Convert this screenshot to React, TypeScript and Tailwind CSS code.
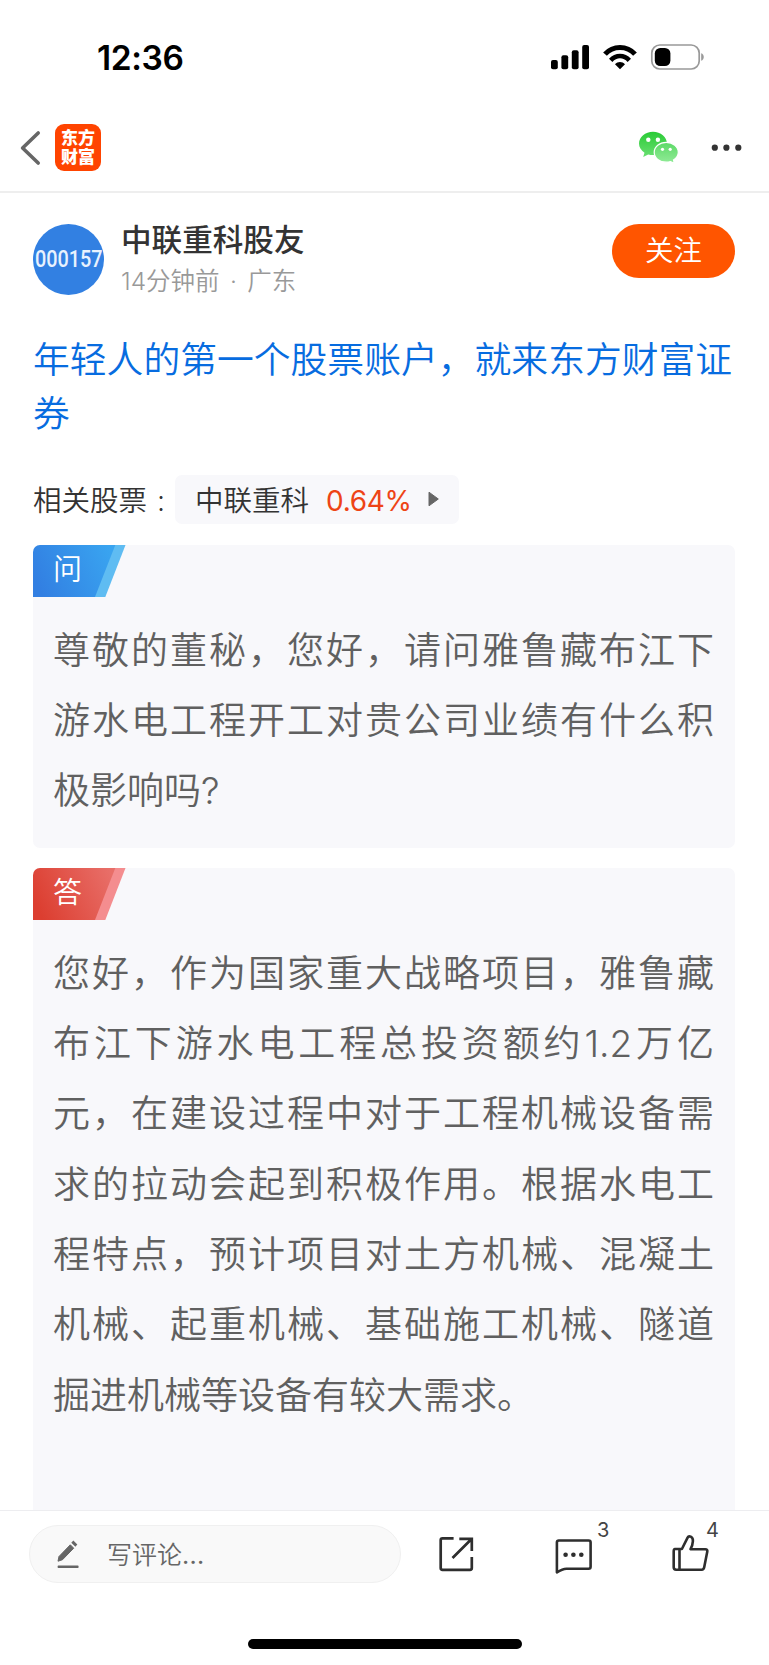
import React from 'react';

interface QaCardProps {
  label: string;
  tone: 'blue' | 'red';
  lines: string[];
  className?: string;
}

const questionLines = [
  '尊敬的董秘，您好，请问雅鲁藏布江下',
  '游水电工程开工对贵公司业绩有什么积',
  '极影响吗?'
];

const answerLines = [
  '您好，作为国家重大战略项目，雅鲁藏',
  '布江下游水电工程总投资额约1.2万亿',
  '元，在建设过程中对于工程机械设备需',
  '求的拉动会起到积极作用。根据水电工',
  '程特点，预计项目对土方机械、混凝土',
  '机械、起重机械、基础施工机械、隧道',
  '掘进机械等设备有较大需求。'
];

function StatusBar() {
  return (
    <div className="flex h-[103px] shrink-0 items-start justify-between pl-[97px] pr-[64px] pt-[37px]">
      <span className="pt-px text-[33.500px] font-semibold leading-[41px] tracking-[-0.400px] text-black">12:36</span>
      <div className="flex items-center pt-[7px]">
        <svg width="38" height="26" viewBox="0 0 38 26" fill="#000">
          <rect x="0" y="16" width="6.8" height="9.3" rx="2" />
          <rect x="10.4" y="11.2" width="6.8" height="14.1" rx="2" />
          <rect x="20.8" y="6.2" width="6.8" height="19.1" rx="2" />
          <rect x="31.2" y="1" width="6.8" height="24.3" rx="2" />
        </svg>
        <svg className="ml-[14px]" width="34" height="26" viewBox="0 0 34 26" fill="none" stroke="#000">
          <path d="M2 10.2C10 1.2 24 1.2 32 10.2" strokeWidth="5" />
          <path d="M7.7 16.4C13 10.6 21 10.6 26.3 16.4" strokeWidth="4.6" />
          <path d="M17 25.3L12 20.2C14.8 17.3 19.2 17.3 22 20.2Z" fill="#000" stroke="none" />
        </svg>
        <svg className="ml-[13px]" width="55" height="26" viewBox="0 0 55 26">
          <rect x="1.8" y="1" width="47.4" height="24" rx="8" fill="none" stroke="#999" strokeWidth="1.7" />
          <rect x="4.8" y="4" width="15.6" height="18" rx="5.5" fill="#000" />
          <path d="M51.2 9.2C54.6 10.4 54.6 15.6 51.2 16.8Z" fill="#999" />
        </svg>
      </div>
    </div>
  );
}

function WechatIcon() {
  return (
    <svg width="40" height="33" viewBox="0 0 40 33">
      <defs>
        <linearGradient id="wechat" x1="0" y1="0" x2="0" y2="1">
          <stop offset="0" stopColor="#2acb36" />
          <stop offset="1" stopColor="#6adf72" />
        </linearGradient>
        <linearGradient id="wechatSmall" x1="0" y1="0" x2="0" y2="1">
          <stop offset="0" stopColor="#5cd966" />
          <stop offset="1" stopColor="#92eb98" />
        </linearGradient>
      </defs>
      <path
        d="M14 .8C6.3.8 0 6 0 12.600C0 16.300 2 19.500 5.500 21.700L4.200 26L9.200 23.400C10.700 23.800 12.300 24 14 24C21.700 24 28 19 28 12.600C28 6 21.700.8 14 .8Z"
        fill="url(#wechat)"
      />
      <path
        d="M27.200 11.300C20.500 11.300 15.200 15.700 15.200 21.300C15.200 26.900 20.500 31.200 27.200 31.200C28.800 31.200 30.200 31 31.500 30.600L35.300 32.400L34.500 28.900C37.500 27.100 39.300 24.400 39.300 21.300C39.300 15.700 34 11.300 27.200 11.300Z"
        fill="url(#wechatSmall)"
        stroke="#fff"
        strokeWidth="1.200"
      />
      <circle cx="9.300" cy="8.800" r="2.200" fill="#fff" />
      <circle cx="18.900" cy="8.800" r="2.200" fill="#fff" />
      <circle cx="23.500" cy="18.300" r="1.600" fill="#fff" />
      <circle cx="31.200" cy="18.300" r="1.600" fill="#fff" />
    </svg>
  );
}

function NavBar() {
  return (
    <header className="flex h-[90px] shrink-0 items-start border-b-2 border-[#eee] pl-[19px] pr-[27px] pt-[21px]">
      <svg className="mt-[6px]" width="23" height="36" viewBox="0 0 23 36" fill="none">
        <path d="M19.200 3L3.600 18L19.200 33" stroke="#666" strokeWidth="3.600" strokeLinecap="round" strokeLinejoin="round" />
      </svg>
      <div className="ml-[13px] flex h-[47px] w-[46px] flex-col items-center justify-center rounded-[9px] bg-[#ff4400] text-[17px] font-black leading-[19px] text-white">
        <span>东方</span>
        <span>财富</span>
      </div>
      <div className="ml-auto mt-[7px]">
        <WechatIcon />
      </div>
      <svg className="ml-[32px] mt-[20px]" width="31" height="8" viewBox="0 0 31 8" fill="#333">
        <circle cx="3.800" cy="3.700" r="3.100" />
        <circle cx="15.400" cy="3.700" r="3.100" />
        <circle cx="27.300" cy="3.700" r="3.100" />
      </svg>
    </header>
  );
}

function AuthorRow() {
  return (
    <div className="flex h-[75px] items-start">
      <div className="mt-[2px] flex h-[71px] w-[71px] shrink-0 items-center justify-center rounded-full bg-[#3280e2] pb-px">
        <span className="inline-block scale-x-[0.81] font-['Roboto'] text-[24.500px] font-medium leading-none text-[#e8f2fe]">
          000157
        </span>
      </div>
      <div className="ml-[17px] flex flex-col">
        <span className="text-[30.600px] font-medium leading-[36px] text-[#333]">中联重科股友</span>
        <span className="mt-[7px] text-[24.500px] font-[350] leading-[32px] text-[#999] [word-spacing:3.500px]">
          14分钟前 · 广东
        </span>
      </div>
      <button className="ml-auto mt-[2px] h-[54px] w-[123px] rounded-full bg-[#ff5500] pb-px text-[28.500px] font-[350] leading-[50px] text-white">
        关注
      </button>
    </div>
  );
}

function RelatedStock() {
  return (
    <div className="mt-[33px] flex h-[49px] items-center text-[28.500px] font-[350] text-[#333]">
      <span className="w-[142px] whitespace-nowrap pt-[4px] [word-spacing:2px]">相关股票 :</span>
      <div className="flex h-[49px] w-[284px] items-center rounded-[7px] bg-[#f8f8fb] pl-[20px]">
        <span className="pt-[4px]">中联重科</span>
        <span className="ml-[17px] pt-[3px] font-['Inter'] text-[28px] font-normal tracking-[-0.300px] text-[#ee4416]">0.64%</span>
        <svg className="ml-auto mr-[20px]" width="11" height="16" viewBox="0 0 11 16">
          <path d="M1 1.200L10.300 8L1 14.800Z" fill="#666" stroke="#666" strokeLinejoin="round" />
        </svg>
      </div>
    </div>
  );
}

function QaCard({ label, tone, lines, className }: QaCardProps) {
  const from = tone === 'blue' ? '#327fe2' : '#dc3e30';
  const to = tone === 'blue' ? '#39a4f0' : '#e86e68';
  const edge = tone === 'blue' ? '#5fbcf2' : '#f48d8f';

  return (
    <section className={`overflow-hidden rounded-[7px] bg-[#f8f8fb] ${className}`}>
      <div className="relative h-[52px] w-[93px]">
        <svg className="absolute inset-0" width="93" height="52" viewBox="0 0 93 52">
          <defs>
            <linearGradient id={`tag-${tone}`} x1="0" y1="0.600" x2="1" y2="0.300">
              <stop offset="0" stopColor={from} />
              <stop offset="1" stopColor={to} />
            </linearGradient>
          </defs>
          <path d="M70 0H92.500L72.300 52H55Z" fill={edge} />
          <path d="M0 0H82.300L62 52H0Z" fill={`url(#tag-${tone})`} />
        </svg>
        <span className="relative block pl-[20px] pt-[4px] text-[29px] font-[350] leading-[42px] text-white">{label}</span>
      </div>
      <div className="pl-[20px] pr-[21px] pt-[19px] text-[37px] font-[350] leading-[70.350px] text-[#606060]">
        {lines.map((line, index) => (
          <p
            key={line}
            className={index < lines.length - 1 ? 'whitespace-nowrap [text-align-last:justify]' : 'whitespace-nowrap'}
          >
            {line}
          </p>
        ))}
      </div>
    </section>
  );
}

function CommentBar() {
  return (
    <footer className="flex h-[155px] shrink-0 flex-col items-center border-t border-[#ededf0] bg-white">
      <div className="flex w-full items-start pl-[29px] pt-[14px]">
        <div className="flex h-[58px] w-[372px] items-center rounded-full border border-[#f0f0f0] bg-[#f9f9f9] pl-[27px] text-[25px] font-[350] text-[#666]">
          <svg width="24" height="30" viewBox="0 0 24 30" fill="#666">
            <path d="M1 22.200L2 17.500L13.300 5.800L16.700 9.200L5.500 20.700Z" stroke="#666" strokeLinejoin="round" />
            <path d="M14.300 3.700L16.300 1.600L20.300 5.500L18.400 7.700Z" />
            <rect x="0.600" y="26.600" width="21" height="2.400" rx="0.800" />
          </svg>
          <span className="ml-[26px] pt-[3px]">写评论<span className="font-normal tracking-[0.300px]">...</span></span>
        </div>
        <svg className="ml-[37px] mt-[11px]" width="37" height="37" viewBox="0 0 37 37" fill="none" stroke="#2e2e2e" strokeWidth="2.700">
          <path d="M15.600 2.300H4.500Q2.700 2.300 2.700 4.100V32Q2.700 33.800 4.500 33.800H32Q33.800 33.800 33.800 32V21" />
          <path d="M21.300 2.800H33.800V15M33.300 3.300L14.500 22" />
        </svg>
        <svg className="ml-[79px] mt-[12px]" width="40" height="38" viewBox="0 0 40 38" fill="none" stroke="#2e2e2e" strokeWidth="2.600">
          <path
            d="M4.600 3.500H34.600Q36.600 3.500 36.600 5.500V29.700Q36.600 31.700 34.600 31.700H12.500Q8.500 31.800 2.900 35.300V5.500Q2.900 3.500 4.900 3.500Z"
            strokeLinejoin="round"
          />
          <g fill="#2e2e2e" stroke="none">
            <circle cx="11.600" cy="17.800" r="2.300" />
            <circle cx="19.400" cy="17.800" r="2.300" />
            <circle cx="27.300" cy="17.800" r="2.300" />
          </g>
        </svg>
        <span className="ml-[3px] mt-[-8px] w-[12px] font-['Inter'] text-[20px] leading-[26px] text-[#444]">3</span>
        <svg className="ml-[62px] mt-[8px]" width="39" height="39" viewBox="0 0 39 39" fill="none" stroke="#2e2e2e" strokeWidth="2.600" strokeLinejoin="round">
          <path d="M3.900 16H10.900L16.600 4.600C17.700 2.300 22.200 3.200 21.900 8.200C21.800 10.800 21 13.500 19.500 16.200H34.300Q36.700 16.200 36.300 18.600L33.200 34.300Q32.700 36.700 30.800 36.700H5.100Q2.700 36.700 2.700 34.300V18.200Q2.700 16 3.900 16Z" />
          <path d="M8.500 16.200V36.500" />
        </svg>
        <span className="ml-[-4px] mt-[-8px] font-['Inter'] text-[20px] leading-[26px] text-[#444]">4</span>
      </div>
      <div className="mb-[16px] mt-auto h-[10px] w-[274px] rounded-full bg-black" />
    </footer>
  );
}

export default function App() {
  return (
    <div className="flex h-[1665px] w-[769px] flex-col overflow-hidden bg-white font-['Inter','Noto_Sans_CJK_SC',sans-serif]">
      <StatusBar />
      <NavBar />
      <main className="min-h-0 flex-1 overflow-hidden pl-[33px] pr-[34px] pt-[29px]">
        <AuthorRow />
        <h1 className="mt-[36px] text-[36.800px] font-[350] leading-[54.300px] text-[#076ce0]">
          年轻人的第一个股票账户，就来东方财富证券
        </h1>
        <RelatedStock />
        <QaCard label="问" tone="blue" lines={questionLines} className="mt-[21px] h-[303px]" />
        <QaCard label="答" tone="red" lines={answerLines} className="mt-[20px] h-[700px]" />
      </main>
      <CommentBar />
    </div>
  );
}
